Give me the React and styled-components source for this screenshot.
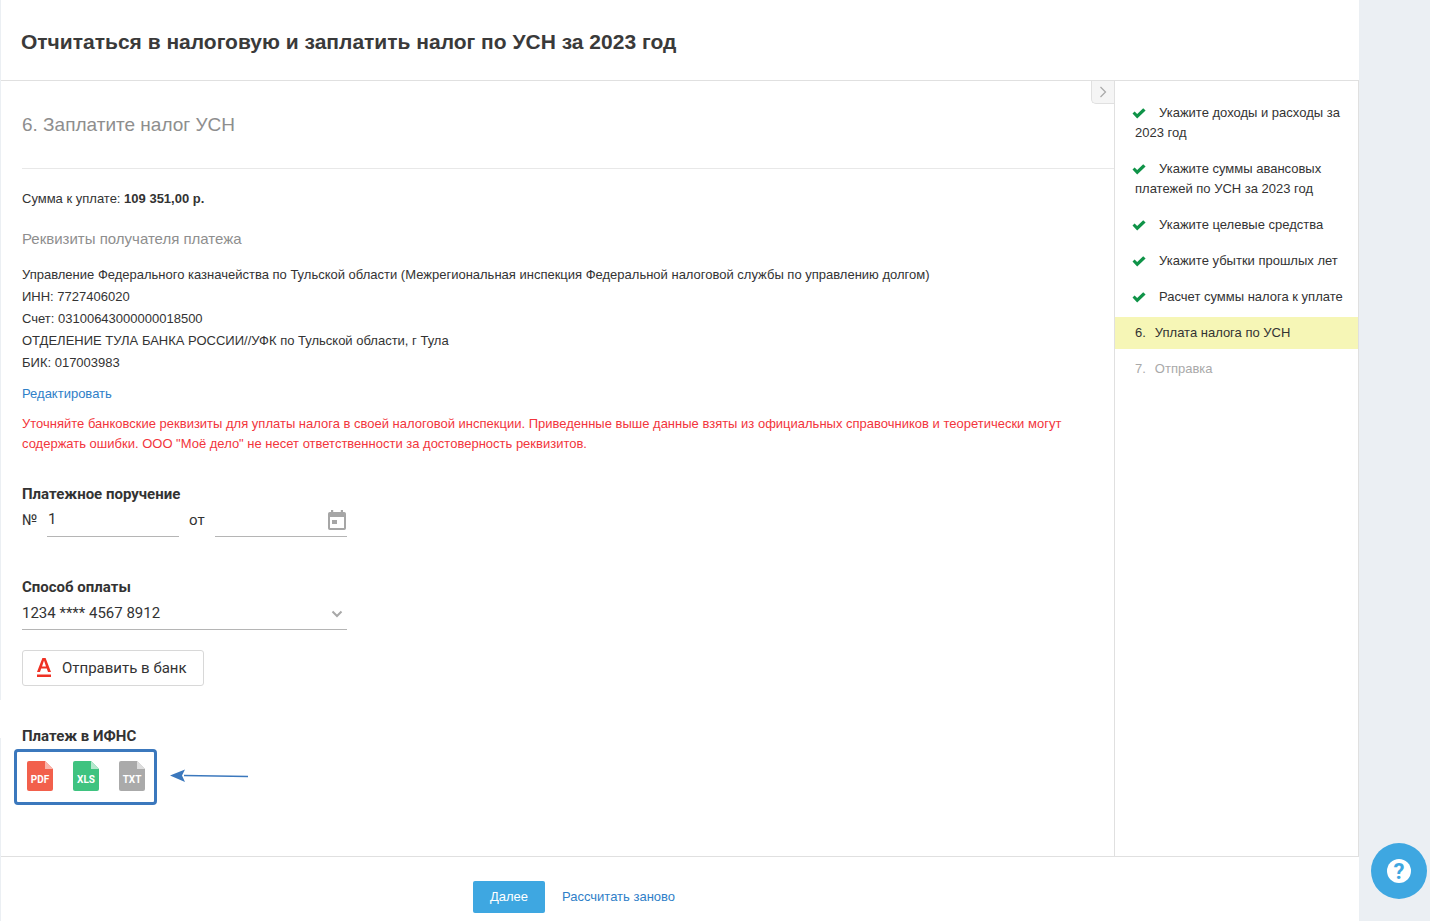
import React from 'react';
import styled, { createGlobalStyle } from 'styled-components';

const Arial = `"Liberation Sans", Arial, sans-serif`;

const Global = createGlobalStyle`
  html, body { margin: 0; padding: 0; background: #ebeff3; }
  body { font-family: Roboto, "Liberation Sans", sans-serif; color: #333; overflow: hidden; }
  * { box-sizing: border-box; }
`;

const Page = styled.div`
  width: 1430px; height: 921px; display: flex; background: #ebeff3; position: relative; overflow: hidden;
`;
const LeftGap = styled.div`
  position: absolute; left: 0; top: 700px; width: 1px; height: 38px; background: #fff;
`;
const Sheet = styled.div`
  width: 1358px; margin-left: 1px; height: 921px; background: #fff; display: flex; flex-direction: column;
`;
const Header = styled.header`
  height: 81px; flex: none; padding: 29px 0 0 20px; border-bottom: 1px solid #e0e0e0;
`;
const Title = styled.h1`
  margin: 0; font: bold 21px/26px ${Arial}; color: #3a3a3a;
`;
const Body = styled.div`
  flex: 1; display: flex; min-height: 0; border-bottom: 1px solid #e0e0e0;
`;
const Main = styled.main`
  width: 1113px; flex: none; padding: 0 0 0 21px; position: relative;
`;
const Collapse = styled.button`
  position: absolute; right: 0; top: 0; width: 23px; height: 23px; padding: 0;
  background: #f5f5f5; border: 1px solid #e0e0e0; border-top: 0; border-right: 0;
  border-radius: 0 0 0 5px; display: flex; align-items: center; justify-content: center;
`;
const StepTitle = styled.h2`
  margin: 0; height: 88px; padding-top: 32px; font: 400 19px/24px ${Arial};
  color: #8e8e8e; border-bottom: 1px solid #e8e8e8;
`;
const Sum = styled.div`
  margin-top: 21px; font: 400 13px/18px ${Arial}; color: #333; height: 18px;
  b { font-weight: 700; }
`;
const SubTitle = styled.div`
  margin-top: 21px; font: 400 15px/20px ${Arial}; color: #8e8e8e;
`;
const Details = styled.div`
  margin-top: 15px; font: 400 13px/22px ${Arial}; color: #333;
`;
const Link = styled.a`
  color: #2f80c8; font: 400 13px/18px ${Arial}; text-decoration: none;
`;
const EditRow = styled.div`
  margin-top: 9px; height: 18px;
`;
const Warning = styled.p`
  margin: 13px 0 0; width: 1060px; font: 400 13px/20px ${Arial}; color: #f2353c;
`;
const FieldLabel = styled.div`
  font: 700 15px/20px Roboto, sans-serif; color: #333; margin-top: ${p => p.$top}px;
`;
const NumberRow = styled.div`
  display: flex; align-items: flex-end; height: 33px; font: 400 15px/20px Roboto, sans-serif; color: #333;
`;
const Hash = styled.span`
  width: 25px; padding-bottom: 7px;
`;
const Underlined = styled.div`
  width: ${p => p.$w}px; height: 33px; border-bottom: 1px solid #b5b5b5; padding: 5px 0 0 1px;
  display: flex; justify-content: space-between; align-items: flex-start;
`;
const Ot = styled.span`
  width: 36px; padding: 0 0 7px 10px;
`;
const CalendarIcon = styled.svg`
  margin: 1px 1px 0 0;
`;
const Select = styled.div`
  width: 325px; height: 33px; border-bottom: 1px solid #b5b5b5; padding-top: 6px;
  display: flex; justify-content: space-between; align-items: flex-start;
  font: 400 15px/20px Roboto, sans-serif; color: #333;
`;
const Chevron = styled.svg`
  margin: 7px 4px 0 0;
`;
const BankButton = styled.button`
  margin-top: 20px; width: 182px; height: 36px; background: #fff; border: 1px solid #d8d8d8; border-radius: 3px;
  display: flex; align-items: center; padding: 0 0 0 14px; gap: 11px;
  font: 400 15px/20px Roboto, sans-serif; color: #333;
`;
const FileRow = styled.div`
  display: flex; align-items: center; margin: 3px 0 0 -8px; position: relative;
`;
const FileBox = styled.div`
  width: 143px; height: 56px; border: 3px solid #3b78bd; border-radius: 4px; display: flex; align-items: center;
  padding: 0 0 2px 10px; gap: 20px;
`;
const FileWrap = styled.div`
  position: relative; width: 26px; height: 30px;
`;
const FileLabel = styled.span`
  position: absolute; left: 0; right: 0; top: 13px; text-align: center; color: #fff;
  font: 700 10px/11px Roboto, sans-serif;
`;
const ArrowSvg = styled.svg`
  margin: -3px 0 0 13px; flex: none;
`;
const Sidebar = styled.aside`
  width: 245px; flex: none; border-left: 1px solid #e0e0e0; border-right: 1px solid #e0e0e0; padding-top: 22px;
`;
const StepItem = styled.div`
  padding: 0 14px 0 20px; font: 400 13px/19.5px ${Arial}; color: #333; position: relative;
  margin-bottom: 17px; text-indent: 24px;
`;
const SingleItem = styled(StepItem)`
  margin-bottom: 16.5px; white-space: nowrap;
`;
const Check = styled.svg`
  position: absolute; left: 17px; top: 5px;
`;
const NumItem = styled.div`
  height: 32px; display: flex; align-items: center; padding: 0 0 2px 20px; gap: 9px;
  font: 400 13px/19px ${Arial};
  color: ${p => (p.$active ? '#333' : '#a9a9a9')};
  background: ${p => (p.$active ? '#f6f6b6' : 'transparent')};
  margin-top: ${p => p.$top}px;
`;
const Footer = styled.footer`
  height: 64px; flex: none; display: flex; align-items: flex-start; padding: 24px 0 0 472px; gap: 17px;
`;
const NextButton = styled.button`
  width: 72px; height: 32px; border: 0; border-radius: 2px; background: #3ea7e1; color: #fff;
  font: 400 13px/20px ${Arial}; padding: 0;
`;
const Recalc = styled(Link)`
  line-height: 32px;
`;
const Help = styled.button`
  position: absolute; left: 1371px; top: 843px; width: 56px; height: 56px; border-radius: 50%; border: 0; padding: 0;
  background: #3ea7e1; display: flex; align-items: center; justify-content: center;
`;

const CheckIcon = () => (
  <Check width="14" height="11" viewBox="0 0 14 11"><path d="M.5 5.6 L2.6 3.4 L5.2 5.9 L11.2 .2 L13.6 2.4 L5.2 10.6 Z" fill="#0f9348" /></Check>
);

const FileIcon = ({ color, fold, label }) => (
  <FileWrap>
    <svg width="26" height="30" viewBox="0 0 26 30">
      <path d="M2 0 H18 L26 8 V28 a2 2 0 0 1 -2 2 H2 a2 2 0 0 1 -2 -2 V2 a2 2 0 0 1 2 -2 Z" fill={color} />
      <path d="M18 0 L26 8 H18 Z" fill={fold} />
    </svg>
    <FileLabel>{label}</FileLabel>
  </FileWrap>
);

export default function App() {
  return (
    <Page>
      <Global />
      <LeftGap />
      <Sheet>
        <Header><Title>Отчитаться в налоговую и заплатить налог по УСН за 2023 год</Title></Header>
        <Body>
          <Main>
            <Collapse aria-label="Свернуть">
              <svg width="8" height="12" viewBox="0 0 8 12"><path d="M1.5 1 L6.5 6 L1.5 11" fill="none" stroke="#a8a8a8" strokeWidth="1.2" /></svg>
            </Collapse>
            <StepTitle>6. Заплатите налог УСН</StepTitle>
            <Sum>Сумма к уплате: <b>109 351,00 р.</b></Sum>
            <SubTitle>Реквизиты получателя платежа</SubTitle>
            <Details>
              Управление Федерального казначейства по Тульской области (Межрегиональная инспекция Федеральной налоговой службы по управлению долгом)<br />
              ИНН: 7727406020<br />
              Счет: 03100643000000018500<br />
              ОТДЕЛЕНИЕ ТУЛА БАНКА РОССИИ//УФК по Тульской области, г Тула<br />
              БИК: 017003983
            </Details>
            <EditRow><Link href="#">Редактировать</Link></EditRow>
            <Warning>
              Уточняйте банковские реквизиты для уплаты налога в своей налоговой инспекции. Приведенные выше данные взяты из официальных справочников и теоретически могут содержать ошибки. ООО "Моё дело" не несет ответственности за достоверность реквизитов.
            </Warning>
            <FieldLabel $top={30}>Платежное поручение</FieldLabel>
            <NumberRow>
              <Hash>№</Hash>
              <Underlined $w={132}>1</Underlined>
              <Ot>от</Ot>
              <Underlined $w={132}>
                <span />
                <CalendarIcon width="18" height="20" viewBox="0 0 18 20">
                  <path fillRule="evenodd" d="M3 0h2.2v2h7.6V0H15v2h1.2A1.8 1.8 0 0 1 18 3.8v14.4a1.8 1.8 0 0 1-1.8 1.8H1.8A1.8 1.8 0 0 1 0 18.2V3.8A1.8 1.8 0 0 1 1.8 2H3V0ZM2 7v11h14V7H2Z" fill="#a6a6a6" />
                  <rect x="4" y="10" width="5" height="4" fill="#a6a6a6" />
                </CalendarIcon>
              </Underlined>
            </NumberRow>
            <FieldLabel $top={40}>Способ оплаты</FieldLabel>
            <Select>
              1234 **** 4567 8912
              <Chevron width="12" height="8" viewBox="0 0 12 8"><path d="M1.5 1.5 L6 6 L10.5 1.5" fill="none" stroke="#a8a8a8" strokeWidth="2" /></Chevron>
            </Select>
            <BankButton>
              <svg width="14" height="20" viewBox="0 0 14 20">
                <path d="M5.4 0 H8.6 L14 14 H11 L9.8 10.6 H4.2 L3 14 H0 Z M5 8.4 H9 L7 2.6 Z" fill="#ef3124" fillRule="evenodd" />
                <rect x="0" y="16.5" width="14" height="2.5" fill="#ef3124" />
              </svg>
              Отправить в банк
            </BankButton>
            <FieldLabel $top={40}>Платеж в ИФНС</FieldLabel>
            <FileRow>
              <FileBox>
                <FileIcon color="#f2604c" fold="#f9b5ab" label="PDF" />
                <FileIcon color="#3fc380" fold="#b4e8cd" label="XLS" />
                <FileIcon color="#aaaaaa" fold="#dddddd" label="TXT" />
              </FileBox>
              <ArrowSvg width="80" height="14" viewBox="0 0 80 14">
                <path d="M14 6.6 L78 7.4" stroke="#3b78bd" strokeWidth="1.5" fill="none" />
                <path d="M0 6.5 L15 0.5 L12 6.5 L15 13 Z" fill="#3b78bd" />
              </ArrowSvg>
            </FileRow>
          </Main>
          <Sidebar>
            <StepItem><CheckIcon />Укажите доходы и расходы за 2023 год</StepItem>
            <StepItem><CheckIcon />Укажите суммы авансовых платежей по УСН за 2023 год</StepItem>
            <SingleItem><CheckIcon />Укажите целевые средства</SingleItem>
            <SingleItem><CheckIcon />Укажите убытки прошлых лет</SingleItem>
            <SingleItem><CheckIcon />Расчет суммы налога к уплате</SingleItem>
            <NumItem $active $top={-6}><span>6.</span><span>Уплата налога по УСН</span></NumItem>
            <NumItem $top={4}><span>7.</span><span>Отправка</span></NumItem>
          </Sidebar>
        </Body>
        <Footer>
          <NextButton>Далее</NextButton>
          <Recalc href="#">Рассчитать заново</Recalc>
        </Footer>
      </Sheet>
      <Help aria-label="Помощь">
        <svg width="24" height="24" viewBox="0 0 24 24">
          <circle cx="12" cy="12" r="12" fill="#fff" />
          <text x="12" y="20" textAnchor="middle" fontFamily="Roboto, sans-serif" fontWeight="700" fontSize="22" fill="#3ea7e1">?</text>
        </svg>
      </Help>
    </Page>
  );
}
